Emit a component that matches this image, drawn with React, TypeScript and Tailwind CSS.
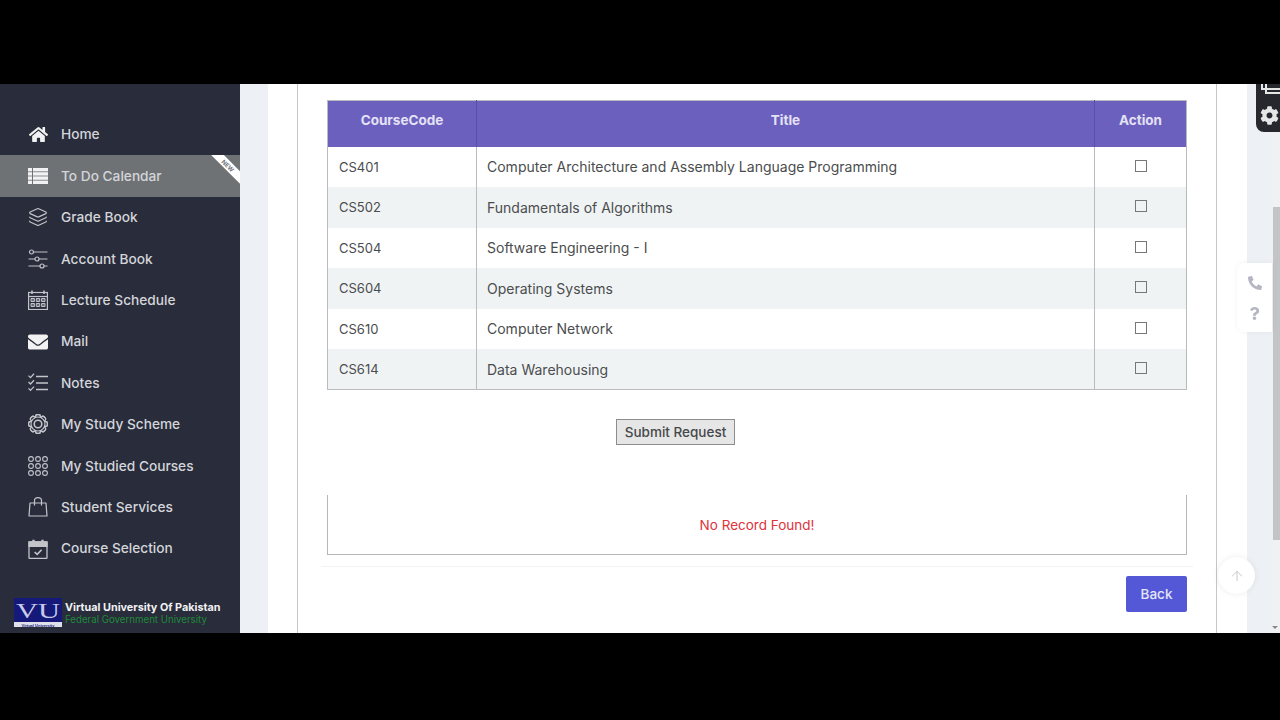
import { ArrowUp, Layers } from 'lucide-react'
import { FaCog, FaEnvelope, FaHome, FaPhone, FaQuestion } from 'react-icons/fa'

function ListIcon() {
  return (
    <svg width="20" height="16" viewBox="0 0 20 16" fill="currentColor">
      <rect x="0" y="0" width="4" height="3.4" />
      <rect x="5" y="0" width="15" height="3.4" />
      <rect x="0" y="4.2" width="4" height="3.4" />
      <rect x="5" y="4.2" width="15" height="3.4" />
      <rect x="0" y="8.4" width="4" height="3.4" />
      <rect x="5" y="8.4" width="15" height="3.4" />
      <rect x="0" y="12.6" width="4" height="3.4" />
      <rect x="5" y="12.6" width="15" height="3.4" />
    </svg>
  )
}

function SlidersIcon() {
  return (
    <svg width="20" height="20" viewBox="0 0 20 20" fill="none" stroke="currentColor" strokeWidth="1.2">
      <circle cx="3.5" cy="3" r="2" />
      <path d="M5.5 3H19.5M0.5 10H7M11 10H19.5M0.5 17H12M16 17H19.5" />
      <circle cx="9" cy="10" r="2" />
      <circle cx="14" cy="17" r="2" />
    </svg>
  )
}

function ScheduleIcon() {
  return (
    <svg width="20" height="20" viewBox="0 0 20 20" fill="none" stroke="currentColor" strokeWidth="1.2">
      <rect x="0.6" y="2.5" width="18.8" height="17" />
      <path d="M0.5 6.5H19.5" />
      <path d="M4 0.5V4M16 0.5V4" strokeWidth="1.6" />
      <path d="M3 8.5h3.4v3H3zM8.3 8.5h3.4v3H8.3zM13.6 8.5H17v3h-3.4zM3 13.5h3.4v3H3zM8.3 13.5h3.4v3H8.3zM13.6 13.5H17v3h-3.4z" fill="currentColor" fillOpacity="0.4" strokeWidth="1" />
    </svg>
  )
}

function NotesIcon() {
  return (
    <svg width="20" height="20" viewBox="0 0 20 20" fill="none" stroke="currentColor" strokeWidth="1.3">
      <path d="M0.5 2.6L2.5 4.6L6 0.8M0.5 9L2.5 11L6 7.2M0.5 15.4L2.5 17.4L6 13.6" />
      <path d="M8 3.4H20M8 10H20M8 16.6H20" strokeWidth="1.5" />
    </svg>
  )
}

function GearIcon() {
  const teeth = [0, 45, 90, 135, 180, 225, 270, 315]
  return (
    <svg width="20" height="20" viewBox="0 0 20 20" fill="none" stroke="currentColor" strokeWidth="1.2">
      {teeth.map((a) => (
        <rect key={a} x="7.6" y="0.6" width="4.8" height="18.8" rx="1.6" transform={`rotate(${a} 10 10)`} />
      ))}
      <circle cx="10" cy="10" r="7" fill="#292c3a" stroke="none" />
      <circle cx="10" cy="10" r="7" />
      <circle cx="10" cy="10" r="3.8" strokeWidth="1.6" />
    </svg>
  )
}

function DotsIcon() {
  const spots = [3, 10, 17]
  return (
    <svg width="20" height="20" viewBox="0 0 20 20" fill="none" stroke="currentColor" strokeWidth="1.1">
      {spots.map((y) =>
        spots.map((x) => <circle key={`${x}-${y}`} cx={x} cy={y} r="2.4" />),
      )}
    </svg>
  )
}

function BagIcon() {
  return (
    <svg width="20" height="20" viewBox="0 0 20 20" fill="none" stroke="currentColor" strokeWidth="1.2">
      <path d="M2 6H18L19 19H1Z" strokeLinejoin="round" />
      <path d="M6.5 8.5V3.5C6.5 1.8 8 0.6 10 0.6C12 0.6 13.5 1.8 13.5 3.5V8.5" />
    </svg>
  )
}

function CalCheckIcon() {
  return (
    <svg width="20" height="20" viewBox="0 0 20 20" fill="none" stroke="currentColor" strokeWidth="1.3">
      <rect x="1" y="3" width="18" height="16.4" rx="0.6" />
      <path d="M1 3H19V7.4H1Z" fill="currentColor" />
      <path d="M5.5 0.8V4M14.5 0.8V4" strokeWidth="2.4" />
      <path d="M6.6 13L9.2 15.4L13.6 10.8" strokeWidth="1.6" />
    </svg>
  )
}

function VuLogo() {
  return (
    <svg width="48" height="29" viewBox="0 0 48 29" className="shrink-0">
      <rect width="48" height="29" fill="#14197a" />
      <text x="24" y="19.5" textAnchor="middle" textLength="44" lengthAdjust="spacingAndGlyphs" fontFamily="Liberation Serif, serif" fontSize="22" fill="#c8cbe8">
        VU
      </text>
      <rect y="24" width="48" height="5" fill="#dfe0ea" />
      <text x="24" y="28.5" textAnchor="middle" fontFamily="Liberation Sans, sans-serif" fontSize="4" fontWeight="700" fill="#14197a">
        Virtual University
      </text>
    </svg>
  )
}

const NAV_ITEMS = [
  { label: 'Home', icon: <FaHome size={19} /> },
  { label: 'To Do Calendar', icon: <ListIcon />, active: true },
  { label: 'Grade Book', icon: <Layers size={20} strokeWidth={1.4} /> },
  { label: 'Account Book', icon: <SlidersIcon /> },
  { label: 'Lecture Schedule', icon: <ScheduleIcon /> },
  { label: 'Mail', icon: <FaEnvelope size={20} /> },
  { label: 'Notes', icon: <NotesIcon /> },
  { label: 'My Study Scheme', icon: <GearIcon /> },
  { label: 'My Studied Courses', icon: <DotsIcon /> },
  { label: 'Student Services', icon: <BagIcon /> },
  { label: 'Course Selection', icon: <CalCheckIcon /> },
]

const COURSES = [
  ['CS401', 'Computer Architecture and Assembly Language Programming'],
  ['CS502', 'Fundamentals of Algorithms'],
  ['CS504', 'Software Engineering - I'],
  ['CS604', 'Operating Systems'],
  ['CS610', 'Computer Network'],
  ['CS614', 'Data Warehousing'],
]

function Sidebar() {
  return (
    <aside className="flex w-[240px] shrink-0 flex-col overflow-hidden bg-[#292c3a] pt-[30px] text-[13.7px] font-medium text-[#d3d5da]">
      {NAV_ITEMS.map(({ label, icon, active }) => (
        <div key={label} className={`relative flex h-[41.4px] items-center overflow-hidden pl-[28px] ${active ? 'bg-[#6f7275]' : ''}`}>
          <span className={`flex w-[20px] justify-center ${label === 'Home' || label === 'Mail' || active ? 'text-[#f2f2f2]' : 'text-[#c2c4ca]'}`}>
            {icon}
          </span>
          <span className="ml-[13px]">{label}</span>
          {active && (
            <span className="absolute right-[-18px] top-[6px] flex h-[9px] w-[60px] rotate-45 items-center justify-center bg-white text-[6px] font-bold text-[#6b6f78]">
              NEW
            </span>
          )}
        </div>
      ))}
      <div className="mt-auto mb-[6px] flex items-center pl-[14px]">
        <VuLogo />
        <div className="ml-[3px] flex flex-col">
          <span className="text-[10.8px] font-bold leading-[13px] text-[#f1f1f3]">Virtual University Of Pakistan</span>
          <span className="text-[9.7px] font-normal leading-[11px] text-[#1f8a3a]">Federal Government University</span>
        </div>
      </div>
    </aside>
  )
}

function CourseTable() {
  return (
    <table className="w-[860px] table-fixed border-collapse border border-[#b9bcbc] text-[14px] text-[#4a4d4e]">
      <colgroup>
        <col className="w-[149px]" />
        <col className="w-[618px]" />
        <col className="w-[92px]" />
      </colgroup>
      <thead>
        <tr className="h-[46px] bg-[#6c60bf] text-[13.5px] font-semibold text-[#e4e2f5]">
          <th className="border-r border-[#5a4fa8] pb-[7px] text-center">CourseCode</th>
          <th className="border-r border-[#5a4fa8] pb-[7px] text-center">Title</th>
          <th className="pb-[7px] text-center">Action</th>
        </tr>
      </thead>
      <tbody>
        {COURSES.map(([code, title], i) => (
          <tr key={code} className={`h-[40.5px] ${i % 2 === 1 ? 'bg-[#f0f3f4]' : 'bg-white'}`}>
            <td className="border-r border-[#b9bcbc] pl-[11px] pt-[1px] text-[13px]">{code}</td>
            <td className="border-r border-[#b9bcbc] pl-[10px]">{title}</td>
            <td>
              <div className="mx-auto mb-[2px] h-[12px] w-[12px] border border-[#777]" />
            </td>
          </tr>
        ))}
      </tbody>
    </table>
  )
}

export default function App() {
  return (
    <div className="flex h-[720px] w-[1280px] flex-col overflow-hidden bg-black font-['Inter',sans-serif]">
      <div className="h-[84px] shrink-0" />
      <div className="relative flex h-[549px] shrink-0 overflow-hidden">
        <Sidebar />
        <main className="flex flex-1 bg-[#edf0f4] pl-[28px] pr-[33px]">
          <div className="flex flex-1 bg-white pl-[29px] pr-[30px]">
            <div className="flex-1 border-x border-[#c4c6c8] pl-[29px] pr-[29px] pt-[16px]">
              <CourseTable />
              <div className="mt-[29px] pl-[289px]">
                <button className="h-[26px] w-[119px] border border-[#8b8d8e] bg-[#e6e6e6] text-[13.5px] font-medium text-[#45484a]">
                  Submit Request
                </button>
              </div>
              <div className="mt-[50px] flex h-[60px] w-[860px] items-center justify-center border-x border-b border-[#b4b6b8] text-[13.5px] text-[#e0323a]">
                No Record Found!
              </div>
              <div className="-mx-[6px] mt-[11px] h-px bg-[#f3f3f3]" />
              <div className="mt-[9px] flex w-[860px] justify-end">
                <button className="h-[36px] w-[61px] rounded-[2px] bg-[#5558d6] text-[13.5px] font-medium text-[#e4e5f8]">Back</button>
              </div>
            </div>
          </div>
        </main>
        {/* scrollbar */}
        <div className="absolute right-0 top-0 h-full w-[7px] bg-[#f0f1f3]" />
        <div className="absolute right-0 top-[123px] h-[333px] w-[7px] bg-[#c3c4c6]" />
        <div className="absolute bottom-[4px] right-[2px] h-0 w-0 border-x-[3px] border-t-[3px] border-x-transparent border-t-[#8a8a8a]" />
        <div className="absolute right-0 top-0 flex h-[48px] w-[24px] flex-col items-center justify-between rounded-bl-[8px] bg-[#26282e] pb-[7px] pl-[3px] text-[#e6e6e6]">
          <svg width="21" height="12" viewBox="0 0 21 12" fill="none" stroke="currentColor" strokeWidth="2">
            <path d="M3 0V5H21M7 0V9H21" />
          </svg>
          <FaCog size={19} />
        </div>
        <div className="absolute right-[8px] top-[179px] flex h-[69px] w-[35px] flex-col items-center justify-center gap-[17px] rounded-l-[8px] bg-white text-[#b4b6c4] shadow-[0_0_6px_rgba(0,0,0,0.05)]">
          <FaPhone size={14} className="rotate-90" />
          <FaQuestion size={13} />
        </div>
        <div className="absolute left-[1218px] top-[473px] flex h-[37px] w-[37px] items-center justify-center rounded-full bg-white text-[#c8cacd] shadow-[0_0_6px_rgba(0,0,0,0.08)]">
          <ArrowUp size={16} strokeWidth={1.5} />
        </div>
      </div>
    </div>
  )
}
